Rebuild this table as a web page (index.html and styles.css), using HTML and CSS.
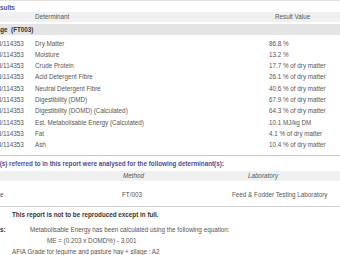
FILE: index.html
```html
<!DOCTYPE html>
<html>
<head>
<meta charset="utf-8">
<link rel="stylesheet" href="styles.css">
</head>
<body>
<div class="page">
  <div class="title">Results</div>
  <div class="table">
    <div class="row head">
      <div class="c lab"></div>
      <div class="c det"><span class="h-det">Determinant</span></div>
      <div class="c res"><span class="h-res">Result Value</span></div>
    </div>
    <div class="group">Silage&nbsp; (FT003)</div>
    <div class="body">
      <div class="row"><div class="c lab">F23/114353</div><div class="c det">Dry Matter</div><div class="c res">86.8 %</div></div>
      <div class="row"><div class="c lab">F23/114353</div><div class="c det">Moisture</div><div class="c res">13.2 %</div></div>
      <div class="row"><div class="c lab">F23/114353</div><div class="c det">Crude Protein</div><div class="c res">17.7 % of dry matter</div></div>
      <div class="row"><div class="c lab">F23/114353</div><div class="c det">Acid Detergent Fibre</div><div class="c res">26.1 % of dry matter</div></div>
      <div class="row"><div class="c lab">F23/114353</div><div class="c det">Neutral Detergent Fibre</div><div class="c res">40.6 % of dry matter</div></div>
      <div class="row"><div class="c lab">F23/114353</div><div class="c det">Digestibility (DMD)</div><div class="c res">67.9 % of dry matter</div></div>
      <div class="row"><div class="c lab">F23/114353</div><div class="c det">Digestibility (DOMD) (Calculated)</div><div class="c res">64.3 % of dry matter</div></div>
      <div class="row"><div class="c lab">F23/114353</div><div class="c det">Est. Metabolisable Energy (Calculated)</div><div class="c res">10.1 MJ/kg DM</div></div>
      <div class="row"><div class="c lab">F23/114353</div><div class="c det">Fat</div><div class="c res">4.1 % of dry matter</div></div>
      <div class="row"><div class="c lab">F23/114353</div><div class="c det">Ash</div><div class="c res">10.4 % of dry matter</div></div>
    </div>
  </div>

  <div class="subtitle">The sample(s) referred to in this report were analysed for the following determinant(s):</div>
  <div class="mtable">
    <div class="mrow mhead">
      <div class="m1"></div>
      <div class="m2">Method</div>
      <div class="m3">Laboratory</div>
    </div>
    <div class="mrow mbody">
      <div class="m1 cut">Silage</div>
      <div class="m2">FT/003</div>
      <div class="m3 lab-data">Feed &amp; Fodder Testing Laboratory</div>
    </div>
  </div>

  <p class="notice">This report is not to be reproduced except in full.</p>

  <div class="notes">
    <div class="notes-label">Notes:</div>
    <div class="notes-text">
      <div>Metabolisable Energy has been calculated using the following equation:</div>
      <div class="eq">ME = (0.203 x DOMD%) - 3.001</div>
    </div>
  </div>
  <p class="grade">AFIA Grade for legume and pasture hay + silage : A2</p>
</div>
</body>
</html>
```
FILE: styles.css
```css
html, body {
  margin: 0;
  padding: 0;
  background: #ffffff;
}
body {
  width: 340px;
  height: 255px;
  overflow: hidden;
  font-family: "Liberation Sans", Arial, sans-serif;
  font-size: 6.3px;
  color: #555555;
}
.page {
  padding-top: 1px;
  border-top: 1px solid #e2e2e2;
}
.title {
  height: 10px;
  line-height: 12px;
  font-weight: bold;
  color: #4d4d96;
  margin-left: -8px;
}
.row {
  display: grid;
  grid-template-columns: 35px 234px 1fr;
  height: 11.33px;
  line-height: 11.33px;
  white-space: nowrap;
}
.row.head {
  height: 10px;
  line-height: 10px;
  background: #f0f0f0;
  color: #555555;
}
.h-res { padding-left: 6px; }
.lab {
  overflow: hidden;
  text-indent: -9.5px;
}
.group {
  margin-top: 2px;
  height: 11px;
  line-height: 11px;
  background: #e4e4e4;
  font-weight: bold;
  color: #333333;
  text-indent: -11px;
  white-space: nowrap;
}
.body {
  padding-top: 2.5px;
  padding-bottom: 4px;
  border-bottom: 1px solid #c8c8c8;
}
.subtitle {
  margin-left: -35px;
  height: 15px;
  line-height: 15px;
  font-weight: bold;
  color: #4d4d96;
  white-space: nowrap;
}
.mrow {
  display: grid;
  grid-template-columns: 122px 110px 1fr;
  white-space: nowrap;
}
.mhead {
  height: 10px;
  line-height: 10px;
  background: #f0f0f0;
  font-style: italic;
}
.mhead .m2 { padding-left: 1px; }
.mhead .m3 { padding-left: 16px; }
.mbody {
  height: 25px;
  line-height: 27px;
  border-bottom: 1px solid #d0d0d0;
}
.cut {
  overflow: hidden;
  text-indent: -14px;
}
.notice {
  margin: 0;
  padding-left: 12px;
  height: 16px;
  line-height: 16px;
  font-weight: bold;
  color: #333333;
  white-space: nowrap;
}
.notes {
  display: flex;
  white-space: nowrap;
  line-height: 11.3px;
  margin-top: 1px;
}
.notes-label {
  width: 30px;
  text-indent: -14px;
  font-weight: bold;
  color: #333333;
}
.eq { padding-left: 17px; }
.grade {
  margin: 0;
  padding-left: 12px;
  line-height: 11.3px;
  white-space: nowrap;
}
```
